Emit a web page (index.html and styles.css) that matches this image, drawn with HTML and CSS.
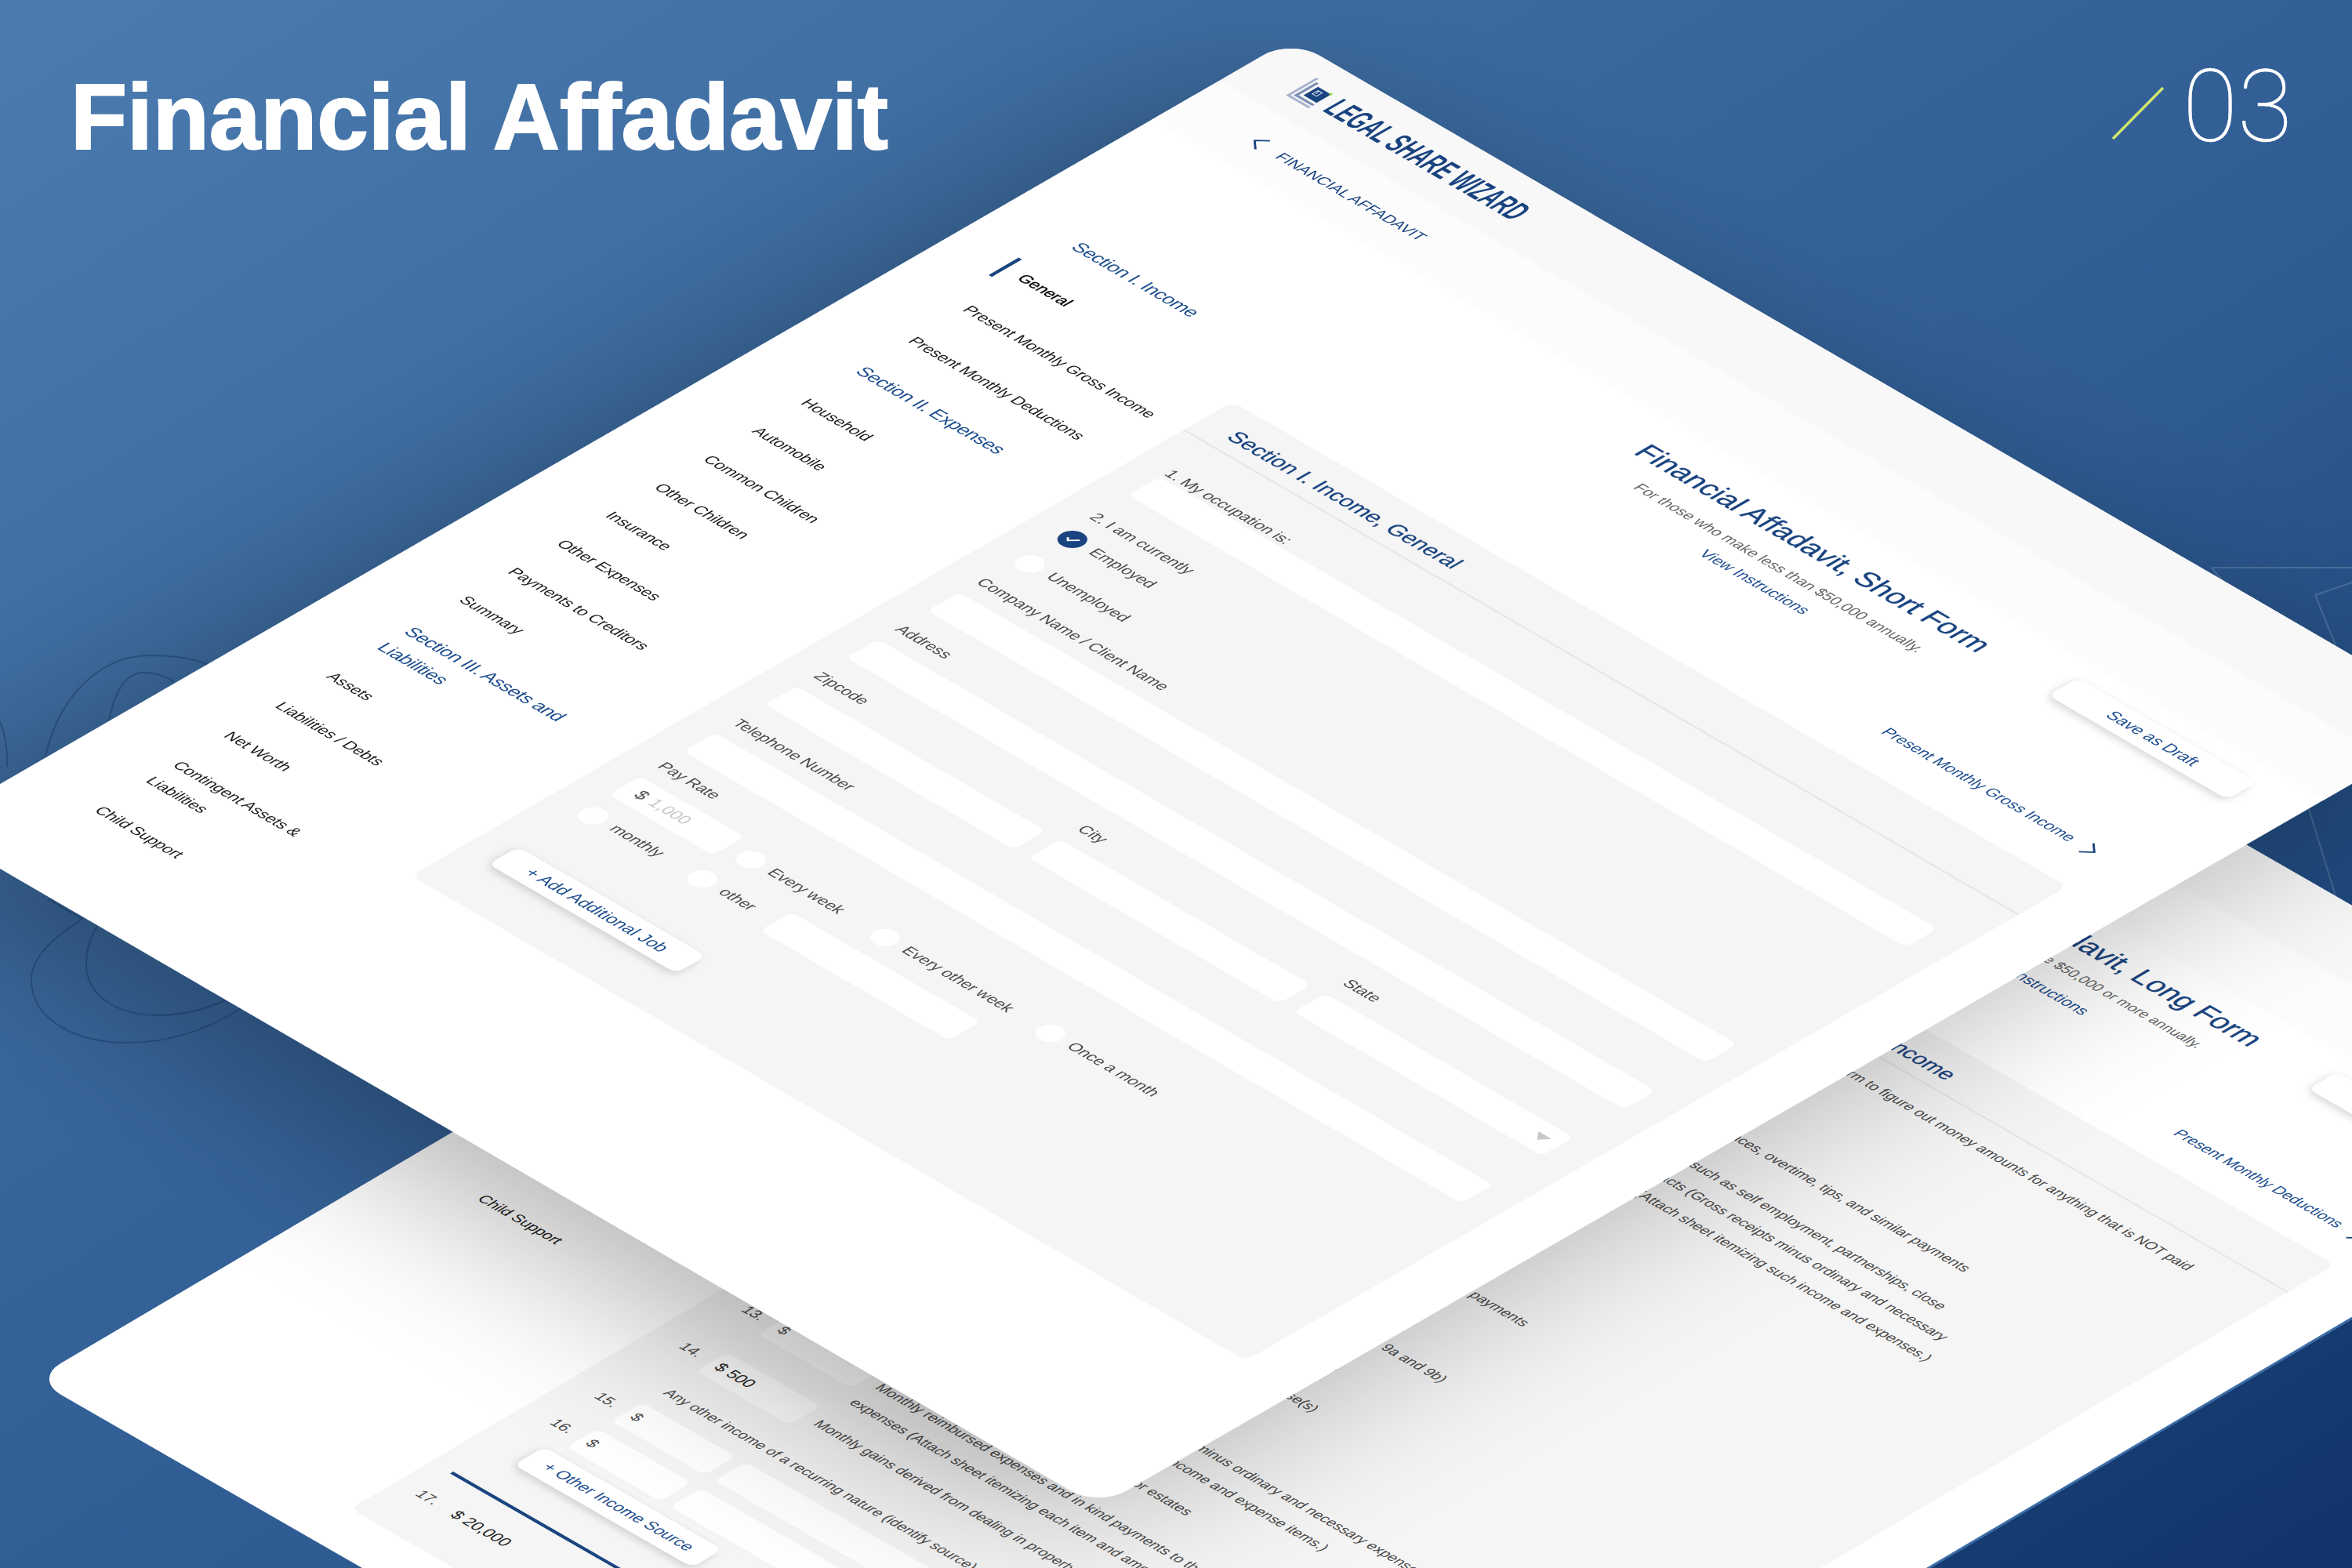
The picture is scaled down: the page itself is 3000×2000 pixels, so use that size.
FILE: index.html
```html
<!DOCTYPE html>
<html lang="en">
<head>
<meta charset="utf-8">
<title>Financial Affadavit</title>
<link rel="stylesheet" href="styles.css">
</head>
<body>
<div class="stage">
  <svg class="decor" viewBox="0 0 3000 2000" aria-hidden="true">
    <g class="decor-dark">
      <path d="M57 970C70 900 120 836 191 836C225 836 250 840 270 850"/>
      <path d="M139 919C145 885 160 858 182 858C200 858 212 862 222 870"/>
      <path d="M0 920C8 940 10 960 9 978"/>
      <path d="M62 1147L105 1172C70 1195 40 1220 40 1249C40 1300 95 1330 163 1330C220 1330 270 1310 306 1287"/>
      <path d="M124 1182C115 1195 110 1212 110 1230C110 1270 150 1295 201 1295C240 1295 270 1285 297 1271"/>
    </g>
    <g class="decor-light">
      <path d="M2821 724H3000M2821 724L2850 760M2953 759L3000 743M2953 759L2979 823M2945 1032L2979 1143"/>
    </g>
  </svg>

  <section class="page page-long">
    <header class="brand">
      <svg class="logo" viewBox="0 0 28 38" aria-hidden="true"><path class="logo-l1" d="M1.5 0V36.5H28"/><path class="logo-l2" d="M6.5 5V31.5H28"/><rect class="logo-box" x="11" y="9" width="16" height="18"/><path class="logo-clip" d="M15 13h5v7h-5zM17 15v3"/><rect class="logo-dot" x="25.500" y="7.500" width="3" height="3"/></svg>
      <span class="brand-name">LEGAL SHARE WIZARD</span>
    </header>
    <div class="crumb">
      <svg class="chev" viewBox="0 0 12 20" aria-hidden="true"><path d="M11 1L1 10L11 19"/></svg>
      <span>FINANCIAL AFFADAVIT</span>
    </div>
    <div class="layout">
      <nav class="nav">
        <div class="nav-group nav-one">
          <a class="nav-title">Section I. Income</a>
          <a class="nav-item">General</a>
          <a class="nav-item is-active">Present Monthly Gross Income</a>
          <a class="nav-item">Present Monthly Deductions</a>
        </div>
        <div class="nav-group nav-two">
          <a class="nav-title">Section II. Expenses</a>
          <a class="nav-item">Household</a>
          <a class="nav-item">Automobile</a>
          <a class="nav-item">Common Children</a>
          <a class="nav-item">Other Children</a>
          <a class="nav-item">Insurance</a>
          <a class="nav-item">Other Expenses</a>
          <a class="nav-item">Payments to Creditors</a>
          <a class="nav-item">Summary</a>
        </div>
        <div class="nav-group nav-three">
          <a class="nav-title">Section III. Assets and<br>Liabilities</a>
          <a class="nav-item">Assets</a>
          <a class="nav-item">Liabilities / Debts</a>
          <a class="nav-item">Net Worth</a>
          <a class="nav-item">Contingent Assets &amp;<br>Liabilities</a>
          <a class="nav-item">Child Support</a>
        </div>
      </nav>
      <main class="main">
        <div class="top">
          <div></div>
          <div class="heading">
            <h1>Financial Affadavit, Long Form</h1>
            <p class="sub">For those who make $50,000 or more annually.</p>
            <a class="view">View Instructions</a>
          </div>
          <button class="btn btn-save">Save as Draft</button>
        </div>
        <div class="next"><a>Present Monthly Deductions</a><svg class="chev" viewBox="0 0 12 20" aria-hidden="true"><path d="M1 1L11 10L1 19"/></svg></div>
        <div class="card">
          <h2 class="card-title">Section I. Income, Present Monthly Gross Income</h2>
          <div class="card-body">
            <p class="note">All amounts must be MONTHLY. See the instructions with this form to figure out money amounts for anything that is NOT paid<br>monthly.</p>
            <div class="rows">
              <div class="row"><span class="num">1.</span><span class="box">$</span><p class="desc">Monthly gross salary or wages</p></div>
              <div class="row"><span class="num">2.</span><span class="box">$</span><p class="desc">Monthly bonuses, commissions, allowances, overtime, tips, and similar payments</p></div>
              <div class="row"><span class="num">3.</span><span class="box">$</span><p class="desc">Monthly business income from sources such as self employment, partnerships, close<br>corporations, and/or independent contracts (Gross receipts minus ordinary and necessary<br>expenses required to produce income.)(Attach sheet itemizing such income and expenses.)</p></div>
              <div class="row"><span class="num">4.</span><span class="box">$</span><p class="desc">Monthly disability benefits</p></div>
              <div class="row"><span class="num">5.</span><span class="box">$</span><p class="desc">Monthly Workers' Compensation</p></div>
              <div class="row"><span class="num">6.</span><span class="box">$</span><p class="desc">Monthly Unemployment Compensation</p></div>
              <div class="row"><span class="num">7.</span><span class="box">$</span><p class="desc">Monthly pension, retirement, or annuity payments</p></div>
              <div class="row"><span class="num">8.</span><span class="box">$</span><p class="desc">Monthly Social Security benefits</p></div>
              <div class="row"><span class="num">9.</span><span class="box">$</span><p class="desc">Monthly alimony actually received (Add 9a and 9b)</p></div>
              <div class="row"><span class="num">9a.</span><span class="box">$</span><p class="desc desc-in">From this case</p></div>
              <div class="row"><span class="num">9b.</span><span class="box">$</span><p class="desc desc-in">From other case(s)</p></div>
              <div class="row"><span class="num">10.</span><span class="box">$</span><p class="desc">Monthly interest and dividends</p></div>
              <div class="row"><span class="num">11.</span><span class="box">$</span><p class="desc">Monthly rental income (gross receipts minus ordinary and necessary expenses<br>income.)(Attach sheet itemizing such income and expense items.)</p></div>
              <div class="row"><span class="num">12.</span><span class="box">$</span><p class="desc">Monthly income from royalties, trusts, or estates</p></div>
              <div class="row"><span class="num">13.</span><span class="box">$</span><p class="desc">Monthly reimbursed expenses and in kind payments to the extent that they reduce personal living<br>expenses (Attach sheet itemizing each item and amount.)</p></div>
              <div class="row"><span class="num">14.</span><span class="box box-filled">$ 500</span><p class="desc">Monthly gains derived from dealing in property (not including nonrecurring gains)</p></div>
              <p class="other-label">Any other income of a recurring nature (identify source)</p>
              <div class="row"><span class="num">15.</span><span class="box">$</span><span class="box box-wide"></span></div>
              <div class="row"><span class="num">16.</span><span class="box">$</span><span class="box box-wide"></span></div>
            </div>
            <button class="btn btn-source">+ Other Income Source</button>
            <div class="total"><span class="num">17.</span><span class="total-value">$ 20,000</span></div>
          </div>
        </div>
      </main>
    </div>
  </section>

  <div class="page-shadow"></div>

  <section class="page page-short">
    <header class="brand">
      <svg class="logo" viewBox="0 0 28 38" aria-hidden="true"><path class="logo-l1" d="M1.5 0V36.5H28"/><path class="logo-l2" d="M6.5 5V31.5H28"/><rect class="logo-box" x="11" y="9" width="16" height="18"/><path class="logo-clip" d="M15 13h5v7h-5zM17 15v3"/><rect class="logo-dot" x="25.500" y="7.500" width="3" height="3"/></svg>
      <span class="brand-name">LEGAL SHARE WIZARD</span>
    </header>
    <div class="crumb">
      <svg class="chev" viewBox="0 0 12 20" aria-hidden="true"><path d="M11 1L1 10L11 19"/></svg>
      <span>FINANCIAL AFFADAVIT</span>
    </div>
    <div class="layout">
      <nav class="nav">
        <div class="nav-group nav-one">
          <a class="nav-title">Section I. Income</a>
          <a class="nav-item is-active">General</a>
          <a class="nav-item">Present Monthly Gross Income</a>
          <a class="nav-item">Present Monthly Deductions</a>
        </div>
        <div class="nav-group nav-two">
          <a class="nav-title">Section II. Expenses</a>
          <a class="nav-item">Household</a>
          <a class="nav-item">Automobile</a>
          <a class="nav-item">Common Children</a>
          <a class="nav-item">Other Children</a>
          <a class="nav-item">Insurance</a>
          <a class="nav-item">Other Expenses</a>
          <a class="nav-item">Payments to Creditors</a>
          <a class="nav-item">Summary</a>
        </div>
        <div class="nav-group nav-three">
          <a class="nav-title">Section III. Assets and<br>Liabilities</a>
          <a class="nav-item">Assets</a>
          <a class="nav-item">Liabilities / Debts</a>
          <a class="nav-item">Net Worth</a>
          <a class="nav-item">Contingent Assets &amp;<br>Liabilities</a>
          <a class="nav-item">Child Support</a>
        </div>
      </nav>
      <main class="main">
        <div class="top">
          <div></div>
          <div class="heading">
            <h1>Financial Affadavit, Short Form</h1>
            <p class="sub">For those who make less than $50,000 annually.</p>
            <a class="view">View Instructions</a>
          </div>
          <button class="btn btn-save">Save as Draft</button>
        </div>
        <div class="next"><a>Present Monthly Gross Income</a><svg class="chev" viewBox="0 0 12 20" aria-hidden="true"><path d="M1 1L11 10L1 19"/></svg></div>
        <div class="card">
          <h2 class="card-title">Section I. Income, General</h2>
          <form class="form">
            <div class="field field-first"><label>1. My occupation is:</label><span class="input"></span></div>
            <div class="field">
              <label>2. I am currently</label>
              <div class="radios">
                <div class="radio"><span class="dot dot-on"><svg viewBox="0 0 26 26" aria-hidden="true"><path d="M8 13.500L11.500 17L18.500 9.500"/></svg></span>Employed</div>
                <div class="radio"><span class="dot"></span>Unemployed</div>
              </div>
            </div>
            <div class="field"><label>Company Name / Client Name</label><span class="input"></span></div>
            <div class="field"><label>Address</label><span class="input"></span></div>
            <div class="triple">
              <div class="field"><label>Zipcode</label><span class="input"></span></div>
              <div class="field"><label>City</label><span class="input"></span></div>
              <div class="field"><label>State</label><span class="input input-select"></span></div>
            </div>
            <div class="field"><label>Telephone Number</label><span class="input"></span></div>
            <div class="field field-pay">
              <label>Pay Rate</label>
              <div class="rate-one">
                <span class="input input-pay"><b>$</b><i>1,000</i></span>
                <div class="radio"><span class="dot"></span>Every week</div>
                <div class="radio"><span class="dot"></span>Every other week</div>
                <div class="radio"><span class="dot"></span>Once a month</div>
              </div>
              <div class="rate-two">
                <div class="radio"><span class="dot"></span>monthly</div>
                <div class="radio"><span class="dot"></span>other</div>
                <span class="input"></span>
              </div>
            </div>
          </form>
          <button class="btn btn-add">+ Add Additional Job</button>
        </div>
      </main>
    </div>
  </section>

  <header class="hero">
    <div class="hero-title">Financial Affadavit</div>
    <div class="hero-count">
      <svg class="slash" viewBox="0 0 70 70" aria-hidden="true"><path d="M67 2L3 67"/></svg>
      <span>03</span>
    </div>
  </header>
</div>
</body>
</html>
```
FILE: styles.css
```css
* { box-sizing: border-box; }
html, body { margin: 0; padding: 0; }
body { width: 3000px; height: 2000px; overflow: hidden; font-family: "Liberation Sans", Arial, sans-serif; }
a { display: block; }

.stage {
  position: relative;
  width: 3000px;
  height: 2000px;
  overflow: hidden;
  background: linear-gradient(148deg, #4c7bb0 0%, #3c6b9f 28%, #2e5b92 58%, #1d467a 80%, #10336a 100%);
}

.decor { position: absolute; inset: 0; width: 3000px; height: 2000px; fill: none; stroke-width: 2; }
.decor-dark { stroke: rgba(20, 50, 95, .4); }
.decor-light { stroke: rgba(255, 255, 255, .16); }

.hero {
  position: relative;
  display: flex;
  justify-content: space-between;
  align-items: flex-start;
  padding: 72px 76px 0 90px;
}
.hero-title {
  margin-top: 18px;
  font-size: 118px;
  line-height: 118px;
  font-weight: 700;
  letter-spacing: -.1px;
  color: #fff;
  -webkit-text-stroke: 2px #fff;
}
.hero-count {
  display: flex;
  align-items: flex-start;
  gap: 22px;
  font-family: Roboto, sans-serif;
  font-weight: 100;
  font-size: 128px;
  line-height: 128px;
  color: #fff;
  -webkit-text-stroke: .6px #fff;
}
.slash { width: 70px; height: 70px; margin-top: 38px; fill: none; stroke: #d3e56f; stroke-width: 3.5; }

.page {
  position: absolute;
  left: 0;
  top: 0;
  width: 1440px;
  background: #fff;
  border-radius: 34px;
  transform-origin: 0 0;
  overflow: visible;
  color: #4a4a4a;
  font-size: 17px;
}
.page-short {
  height: 1677px;
  transform: matrix(1.0378, .6028, -1.0378, .5986, 1647, 50);
}
.page-shadow {
  position: absolute;
  left: 0;
  top: 0;
  width: 1440px;
  height: 1677px;
  border-radius: 34px;
  transform-origin: 0 0;
  transform: matrix(1.0378, .6028, -1.0378, .5986, 1647, 50);
  will-change: transform;
  box-shadow: 0 60px 200px rgba(0, 0, 0, .3);
}
.page-long {
  height: 1993px;
  transform: matrix(.9924, .5708, -.9924, .5856, 2021, 592);
  box-shadow: 3px 0 0 #3c6ea8;
}

.brand {
  display: flex;
  align-items: center;
  gap: 10px;
  height: 88px;
  padding-left: 56px;
  background: #f8f8f8;
  border-radius: 34px 34px 0 0;
}
.logo { width: 28px; height: 38px; flex: none; fill: none; }
.logo-l1 { stroke: #a9b4cd; stroke-width: 3; }
.logo-l2 { stroke: #7f90b5; stroke-width: 3; }
.logo-box { fill: #1a4480; }
.logo-clip { stroke: #dfe6f1; stroke-width: 1; }
.logo-dot { fill: #8fd11f; }
.brand-name {
  display: inline-block;
  font-size: 38px;
  line-height: 38px;
  font-weight: 700;
  color: #1a4480;
  white-space: nowrap;
  transform: scaleX(.54);
  transform-origin: 0 50%;
}

.crumb {
  display: flex;
  align-items: center;
  gap: 19px;
  height: 84px;
  padding-left: 84px;
  background: linear-gradient(#fcfcfc, #fdfdfd);
  color: #1a4480;
  font-size: 16.5px;
}
.chev { width: 12px; height: 20px; flex: none; fill: none; stroke: #1a4480; stroke-width: 2; }

.layout { display: flex; align-items: flex-start; }

.nav { width: 349px; padding: 163px 0 0 86px; flex: none; display: flex; flex-direction: column; }
.nav-group { display: flex; flex-direction: column; }
.nav-one { gap: 34px; }
.nav-two { gap: 27px; margin-top: 31px; }
.nav-three { gap: 30px; margin-top: 34px; }
.nav-two .nav-title { margin-bottom: 8px; }
.nav-title { font-size: 20px; line-height: 33px; letter-spacing: -.4px; color: #1f4f8f; white-space: nowrap; }
.nav-item { position: relative; font-size: 17px; line-height: 33px; letter-spacing: -.15px; color: #1c1c1c; white-space: nowrap; }
.nav-item.is-active { color: #000; -webkit-text-stroke: .3px #000; }
.nav-item.is-active::before {
  content: "";
  position: absolute;
  left: -21px;
  top: -2px;
  width: 4px;
  height: 37px;
  background: #1a4480;
}
.page-long .nav { padding: 119px 0 0 90px; }

.main { width: 1022px; flex: none; padding-top: 21px; }
.top { display: grid; grid-template-columns: 219px 1fr 219px; }
.heading { padding-top: 6px; text-align: center; }
h1 { margin: 0; font-size: 31px; line-height: 40px; font-weight: 400; color: #1a4480; -webkit-text-stroke: .3px #1a4480; white-space: nowrap; }
.sub { margin: 9px 0 0; font-size: 16.3px; line-height: 24px; color: #666; white-space: nowrap; }
.view { margin-top: 7px; font-size: 17px; line-height: 24px; color: #1f4f8f; }
.btn {
  display: block;
  height: 37px;
  width: 220px;
  padding: 0;
  border: 0;
  border-radius: 9px;
  background: #fff;
  box-shadow: 0 4px 9px rgba(0, 0, 0, .16);
  color: #1f4f8f;
  font: 400 18.5px/37px "Liberation Sans", Arial, sans-serif;
  text-align: center;
}
.btn-save { margin-left: 8px; font-size: 18px; letter-spacing: -.2px; }

.next { display: flex; align-items: center; justify-content: flex-end; gap: 16px; height: 24px; margin-top: 53px; margin-right: 15px; color: #1f4f8f; font-size: 17px; letter-spacing: -.08px; }

.card { margin-top: 41px; height: 1010px; background: #f5f5f5; border-radius: 10px; padding: 0 35px 0 35px; }
.page-short .card { width: 1026px; }
.card-title {
  margin: 0 -35px;
  padding-left: 34px;
  height: 61px;
  border-bottom: 2px solid #e6e6e6;
  font-size: 23.5px;
  line-height: 71px;
  font-weight: 400;
  color: #1a4480;
  -webkit-text-stroke: .25px #1a4480;
  white-space: nowrap;
}

.form { display: flex; flex-direction: column; gap: 26px; padding-top: 44px; }
label { display: block; height: 20px; margin-bottom: 15px; font-size: 17px; line-height: 20px; letter-spacing: -.08px; color: #4a4a4a; }
.field-first label { margin-bottom: 0; }
.field-first { margin-bottom: 7px; }
.field-pay { margin-top: -8px; }
.input { position: relative; display: block; height: 39px; background: #fff; border-radius: 7px; }
.radios { display: flex; flex-direction: column; gap: 26px; margin: 7px 0 0; }
.radio { display: flex; align-items: center; gap: 11px; height: 26px; font-size: 17px; letter-spacing: -.08px; color: #4a4a4a; white-space: nowrap; }
.dot { width: 26px; height: 26px; flex: none; border-radius: 50%; background: #fff; }
.dot-on { background: #1a4480; }
.dot-on svg { display: block; fill: none; stroke: #fff; stroke-width: 2; }
.triple { display: grid; grid-template-columns: 306px 308px 305px; gap: 18px; }
.input-select::after {
  content: "";
  position: absolute;
  right: 12px;
  top: 15px;
  border-left: 8px solid transparent;
  border-right: 8px solid transparent;
  border-top: 10px solid #c9c9c9;
}
.rate-one { display: grid; grid-template-columns: 143px 165px 203px auto; align-items: center; }
.input-pay { display: flex; align-items: center; width: 128px; padding-left: 16px; font-size: 18px; gap: 7px; }
.input-pay b { font-weight: 400; color: #4a4a4a; }
.input-pay i { font-style: normal; color: #c4c4c4; }
.rate-two { display: grid; grid-template-columns: 134px 103px 232px; align-items: center; margin-top: 12px; }
.btn-add { margin: 60px 0 0 0; width: 231px; }

.page-long h1 { font-size: 32px; }
.page-long .main { padding-top: 13px; }
.page-long .view { margin-top: 11px; padding-left: 8px; font-size: 18px; }
.page-long .sub { padding-left: 32px; font-size: 16px; }
.page-long .next { margin-top: 50px; margin-right: 11px; }
.page-long .card { margin-top: 34px; height: 1528px; }
.page-long .btn-save { margin-top: 8px; }
.page-long .card-title { font-size: 24.2px; }
.card-body { padding-top: 18px; }
.note { margin: 0; font-size: 16.2px; line-height: 33px; color: #4a4a4a; white-space: nowrap; }
.rows { display: flex; flex-direction: column; gap: 10px; margin-top: 16px; }
.row { display: flex; align-items: flex-start; min-height: 47px; }
.num { width: 38px; flex: none; padding-left: 0; font-size: 17px; line-height: 40px; color: #4a4a4a; }
.box { width: 120px; height: 40px; flex: none; padding-left: 8px; background: #fff; border-radius: 7px; font-size: 17px; line-height: 40px; color: #4a4a4a; }
.box-filled { color: #222; font-size: 18px; }
.box-wide { width: 780px; margin-left: 13px; }
.desc { margin: 3.5px 0 0 15px; font-size: 16.2px; line-height: 33px; color: #4a4a4a; white-space: nowrap; }
.desc-in { margin-left: 190px; }
.other-label { margin: 0 0 0 41px; height: 42px; font-size: 16.2px; line-height: 46px; color: #4a4a4a; white-space: nowrap; }
.btn-source { margin: 7px 0 0 23px; width: 229px; height: 39px; font-size: 18px; line-height: 39px; }
.total { display: flex; margin-top: 46px; padding-top: 21px; border-top: 4px solid #1a4480; margin-left: -9px; }
.total-value { padding-left: 8px; font-size: 18px; line-height: 40px; color: #222; }
```
